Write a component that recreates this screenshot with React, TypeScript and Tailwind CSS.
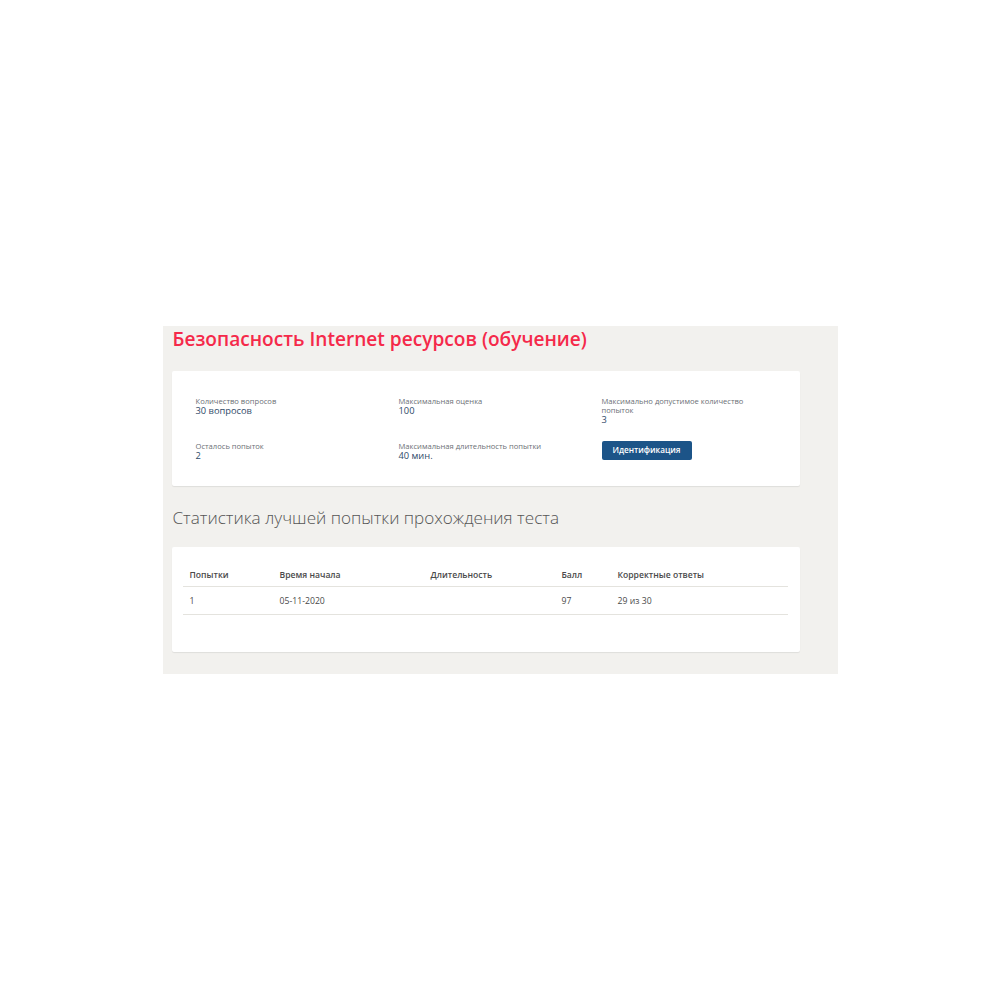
import React from 'react';

const InfoItem = ({ label, value, bold }: { label: string; value: string; bold?: boolean }) => (
  <div className="w-[203px] shrink-0 pr-[40px]">
    <div className="text-[7.6px] leading-[9px] text-[#6b6f75]">{label}</div>
    <div className={`text-[9.3px] leading-[10px] text-[#2f4a68] ${bold ? 'font-medium' : ''}`}>{value}</div>
  </div>
);

const App: React.FC = () => {
  return (
    <div className="w-full h-screen bg-white flex items-center justify-center font-['Open_Sans',sans-serif]">
      <div className="w-[675px] h-[348px] bg-[#f2f1ee] pl-[9px] flex flex-col">
        <h1 className="pl-[1px] h-[26px] text-[19.1px] leading-[26px] font-semibold text-[#f5294a]">
          Безопасность Internet ресурсов (обучение)
        </h1>

        <div className="mt-[19px] w-[628px] h-[115px] bg-white rounded-[2px] shadow-[0_1px_1px_rgba(0,0,0,0.08)] pl-[24px] pt-[26px]">
          <div className="flex h-[45px]">
            <InfoItem label="Количество вопросов" value="30 вопросов" bold />
            <InfoItem label="Максимальная оценка" value="100" />
            <InfoItem label="Максимально допустимое количество попыток" value="3" />
          </div>
          <div className="flex">
            <InfoItem label="Осталось попыток" value="2" />
            <InfoItem label="Максимальная длительность попытки" value="40 мин." bold />
            <div className="w-[203px] shrink-0">
              <button className="w-[90px] h-[19px] -mt-[1px] bg-[#1c5488] rounded-[2px] text-white text-[8.2px] font-semibold flex items-center justify-center">
                Идентификация
              </button>
            </div>
          </div>
        </div>

        <h2 className="mt-[20px] pl-[1px] h-[24px] text-[17.1px] leading-[24px] font-light text-[#555555]">
          Статистика лучшей попытки прохождения теста
        </h2>

        <div className="mt-[17px] w-[628px] h-[105px] bg-white rounded-[2px] shadow-[0_1px_1px_rgba(0,0,0,0.08)] pl-[11px] pt-[15px]">
          <table className="w-[605px] table-fixed border-collapse text-[8.7px] text-[#4a4a4a]">
            <thead>
              <tr className="h-[24px] border-b border-[#e4e3de] text-left text-[8.6px]">
                <th className="w-[90px] pl-[7px] pt-[3px] font-semibold">Попытки</th>
                <th className="w-[151px] pl-[7px] pt-[3px] font-semibold">Время начала</th>
                <th className="w-[131px] pl-[7px] pt-[3px] font-semibold">Длительность</th>
                <th className="w-[56px] pl-[7px] pt-[3px] font-semibold">Балл</th>
                <th className="pl-[7px] pt-[3px] font-semibold">Корректные ответы</th>
              </tr>
            </thead>
            <tbody>
              <tr className="h-[28px] border-b border-[#e4e3de]">
                <td className="pl-[7px] pt-[3px]">1</td>
                <td className="pl-[7px] pt-[3px]">05-11-2020</td>
                <td className="pl-[7px] pt-[3px]"></td>
                <td className="pl-[7px] pt-[3px]">97</td>
                <td className="pl-[7px] pt-[3px]">29 из 30</td>
              </tr>
            </tbody>
          </table>
        </div>
      </div>
    </div>
  );
};

export default App;
